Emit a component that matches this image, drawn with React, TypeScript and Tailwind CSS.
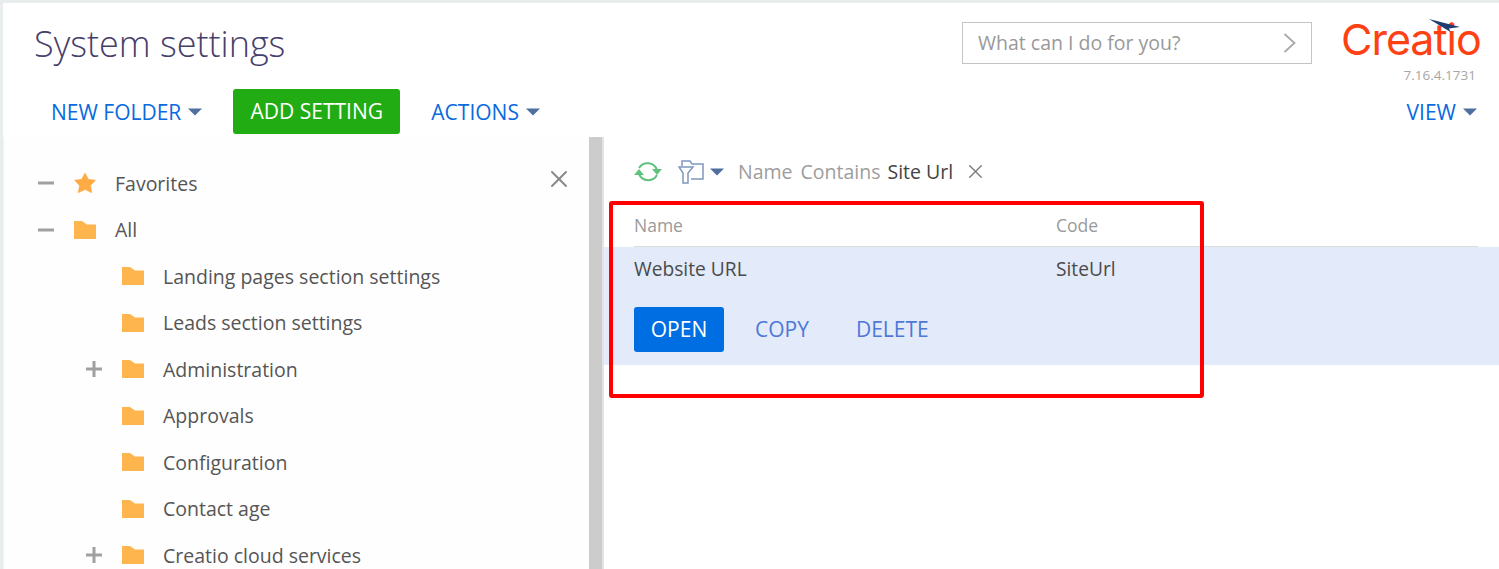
import { X } from "lucide-react";

const sans = "font-['Open_Sans','Noto_Sans',sans-serif]";

function Caret({ className = "" }: { className?: string }) {
  return (
    <svg width="14" height="8" viewBox="0 0 14 8" className={className}>
      <path d="M0 0.5h14L7 7.5z" fill="#4f6f9f" />
    </svg>
  );
}

function Folder() {
  return (
    <svg width="22" height="18" viewBox="0 0 22 18" className="shrink-0">
      <path d="M0 0h8l5 3.500h9V18H0z" fill="#ffb54d" />
    </svg>
  );
}

function Star() {
  return (
    <svg width="22" height="20" viewBox="0 0 22 20" className="shrink-0">
      <path d="M11 0l3.400 6.300 7.100 1-5 5.200 1.300 7.300L11 16.500 4.200 19.800l1.300-7.300-5-5.200 7.100-1z" fill="#ffab45" stroke="#ffab45" strokeWidth="0.600" />
    </svg>
  );
}

function Mark({ type }: { type: "plus" | "minus" }) {
  return (
    <svg width="16" height="16" viewBox="0 0 16 16">
      <rect x="0" y="6.500" width="16" height="3" fill="#a0a0a0" />
      {type === "plus" && <rect x="6.500" y="0" width="3" height="16" fill="#a0a0a0" />}
    </svg>
  );
}

function TreeRow({ label, indent, mark, icon }: { label: string; indent?: boolean; mark?: "plus" | "minus"; icon?: "star" }) {
  return (
    <div className={`flex h-[46.5px] items-center ${indent ? "pl-[78px]" : "pl-[30px]"}`}>
      <span className="flex w-[24px] shrink-0 items-center justify-center">{mark && <Mark type={mark} />}</span>
      <span className="ml-[16px] flex w-[22px] shrink-0 justify-center">{icon === "star" ? <Star /> : <Folder />}</span>
      <span className="ml-[19px] whitespace-nowrap text-[19.500px] text-[#555555]">{label}</span>
    </div>
  );
}

function TopLink({ label }: { label: string }) {
  return (
    <button className="flex items-center gap-[7px] text-[21px] leading-[26px] text-[#0a6ae0]">
      {label}
      <Caret />
    </button>
  );
}

export default function App() {
  return (
    <div className={`relative h-[569px] w-[1499px] overflow-hidden bg-[#e9eded] pt-[3px] pl-[3px] ${sans}`}>
      <header className="h-[134px] bg-white">
        <div className="flex items-start justify-between pr-[20px]">
          <h1 className="pt-[16px] pl-[31px] text-[36px] leading-[50px] font-light text-[#45406b]">System settings</h1>
          <div className="flex items-start">
            <div className="mt-[19px] flex h-[42px] w-[350px] items-center justify-between border border-[#c4c4c4] pr-[15px] pl-[15px] text-[19.500px] text-[#999999]">
              <span>What can I do for you?</span>
              <svg width="13" height="20" viewBox="0 0 13 20" fill="none">
                <path d="M1.500 1l10 9-10 9" stroke="#aaaaaa" strokeWidth="1.800" />
              </svg>
            </div>
            <div className="ml-[29px] flex w-[138px] flex-col items-end">
              <div className="relative h-[46px] w-[138px]">
                <span className="absolute top-[13px] left-0 font-['Inter',sans-serif] text-[43px] leading-[46px] font-normal tracking-[-1px] text-[#ff4013]">Creatio</span>
                <svg width="32" height="14" viewBox="0 0 32 14" className="absolute top-[16px] left-[88px]">
                  <path d="M0 0l31 8-11 1.500 1.500 3.500z" fill="#1f3d70" />
                </svg>
              </div>
              <span className="mt-[18px] pr-[3px] text-[13.500px] leading-[16px] text-[#a6a6a6]">7.16.4.1731</span>
            </div>
          </div>
        </div>
        <div className="mt-[6px] flex items-center justify-between pr-[22px] pl-[48px]">
          <div className="flex items-center">
            <TopLink label="NEW FOLDER" />
            <button className="ml-[31px] h-[45px] w-[167px] rounded-[3px] bg-[#22ac14] text-[21px] text-white">ADD SETTING</button>
            <div className="ml-[31px]">
              <TopLink label="ACTIONS" />
            </div>
          </div>
          <TopLink label="VIEW" />
        </div>
      </header>

      <div className="flex h-[432px] bg-white">
        <aside className="relative w-[586px] shrink-0 border-l border-[#f1f3f3] bg-[#fefefe] pt-[23.200px]">
          <X size={28} color="#8a8a8a" strokeWidth={1.700} className="absolute top-[28px] left-[541px]" />
          <TreeRow label="Favorites" mark="minus" icon="star" />
          <TreeRow label="All" mark="minus" />
          <TreeRow label="Landing pages section settings" indent />
          <TreeRow label="Leads section settings" indent />
          <TreeRow label="Administration" indent mark="plus" />
          <TreeRow label="Approvals" indent />
          <TreeRow label="Configuration" indent />
          <TreeRow label="Contact age" indent />
          <TreeRow label="Creatio cloud services" indent mark="plus" />
        </aside>
        <div className="w-[15px] shrink-0 border-r-2 border-[#e3e3e3] bg-[#cccccc]" />

        <main className="min-w-0 flex-1">
          <div className="flex h-[64px] items-center pt-[5px] pl-[30px]">
            <svg width="28" height="24" viewBox="0 0 28 24" fill="none">
              <path d="M5 8a10 10 0 0 1 18 2" stroke="#5fc27d" strokeWidth="2" />
              <path d="M23 15a10 10 0 0 1-18-1" stroke="#5fc27d" strokeWidth="2" />
              <path d="M0 15h10L5 9zM18 9h10l-5 6z" fill="#5fc27d" />
            </svg>
            <svg width="26" height="24" viewBox="0 0 26 24" fill="none" className="ml-[16px]">
              <path d="M4 6V1h8l2 3h11v15H13M1 7h14l-5 6v10H5V13z" stroke="#7f97bd" strokeWidth="1.500" />
            </svg>
            <Caret className="ml-[6px]" />
            <span className="ml-[14px] text-[19.500px] text-[#9d9d9d]">Name</span>
            <span className="ml-[8px] text-[19.500px] text-[#9d9d9d]">Contains</span>
            <span className="ml-[7px] text-[19.500px] text-[#444444]">Site Url</span>
            <X size={23} color="#7d7d7d" strokeWidth={1.500} className="ml-[11px]" />
          </div>
          <div className="mr-[21px] ml-[30px] grid h-[46px] grid-cols-[422px_1fr] items-center border-b border-[#dddddd] pt-[3px] text-[17.500px] text-[#9a9a9a]">
            <span>Name</span>
            <span>Code</span>
          </div>
          <div className="h-[118px] bg-[#e3eafa] pl-[30px]">
            <div className="grid h-[44px] grid-cols-[422px_1fr] items-center text-[19.200px] text-[#4a4a4a]">
              <span>Website URL</span>
              <span>SiteUrl</span>
            </div>
            <div className="mt-[16px] flex items-center">
              <button className="h-[45px] w-[90px] rounded-[3px] bg-[#006ee3] text-[21px] text-white">OPEN</button>
              <button className="ml-[31px] text-[21px] text-[#4d78d8]">COPY</button>
              <button className="ml-[47px] text-[21px] text-[#4d78d8]">DELETE</button>
            </div>
          </div>
        </main>
      </div>

      {/* red annotation drawn on top of the screenshot */}
      <div className="absolute top-[201px] left-[609px] h-[197px] w-[595px] rounded-[3px] border-4 border-[#ff0000]" />
    </div>
  );
}
